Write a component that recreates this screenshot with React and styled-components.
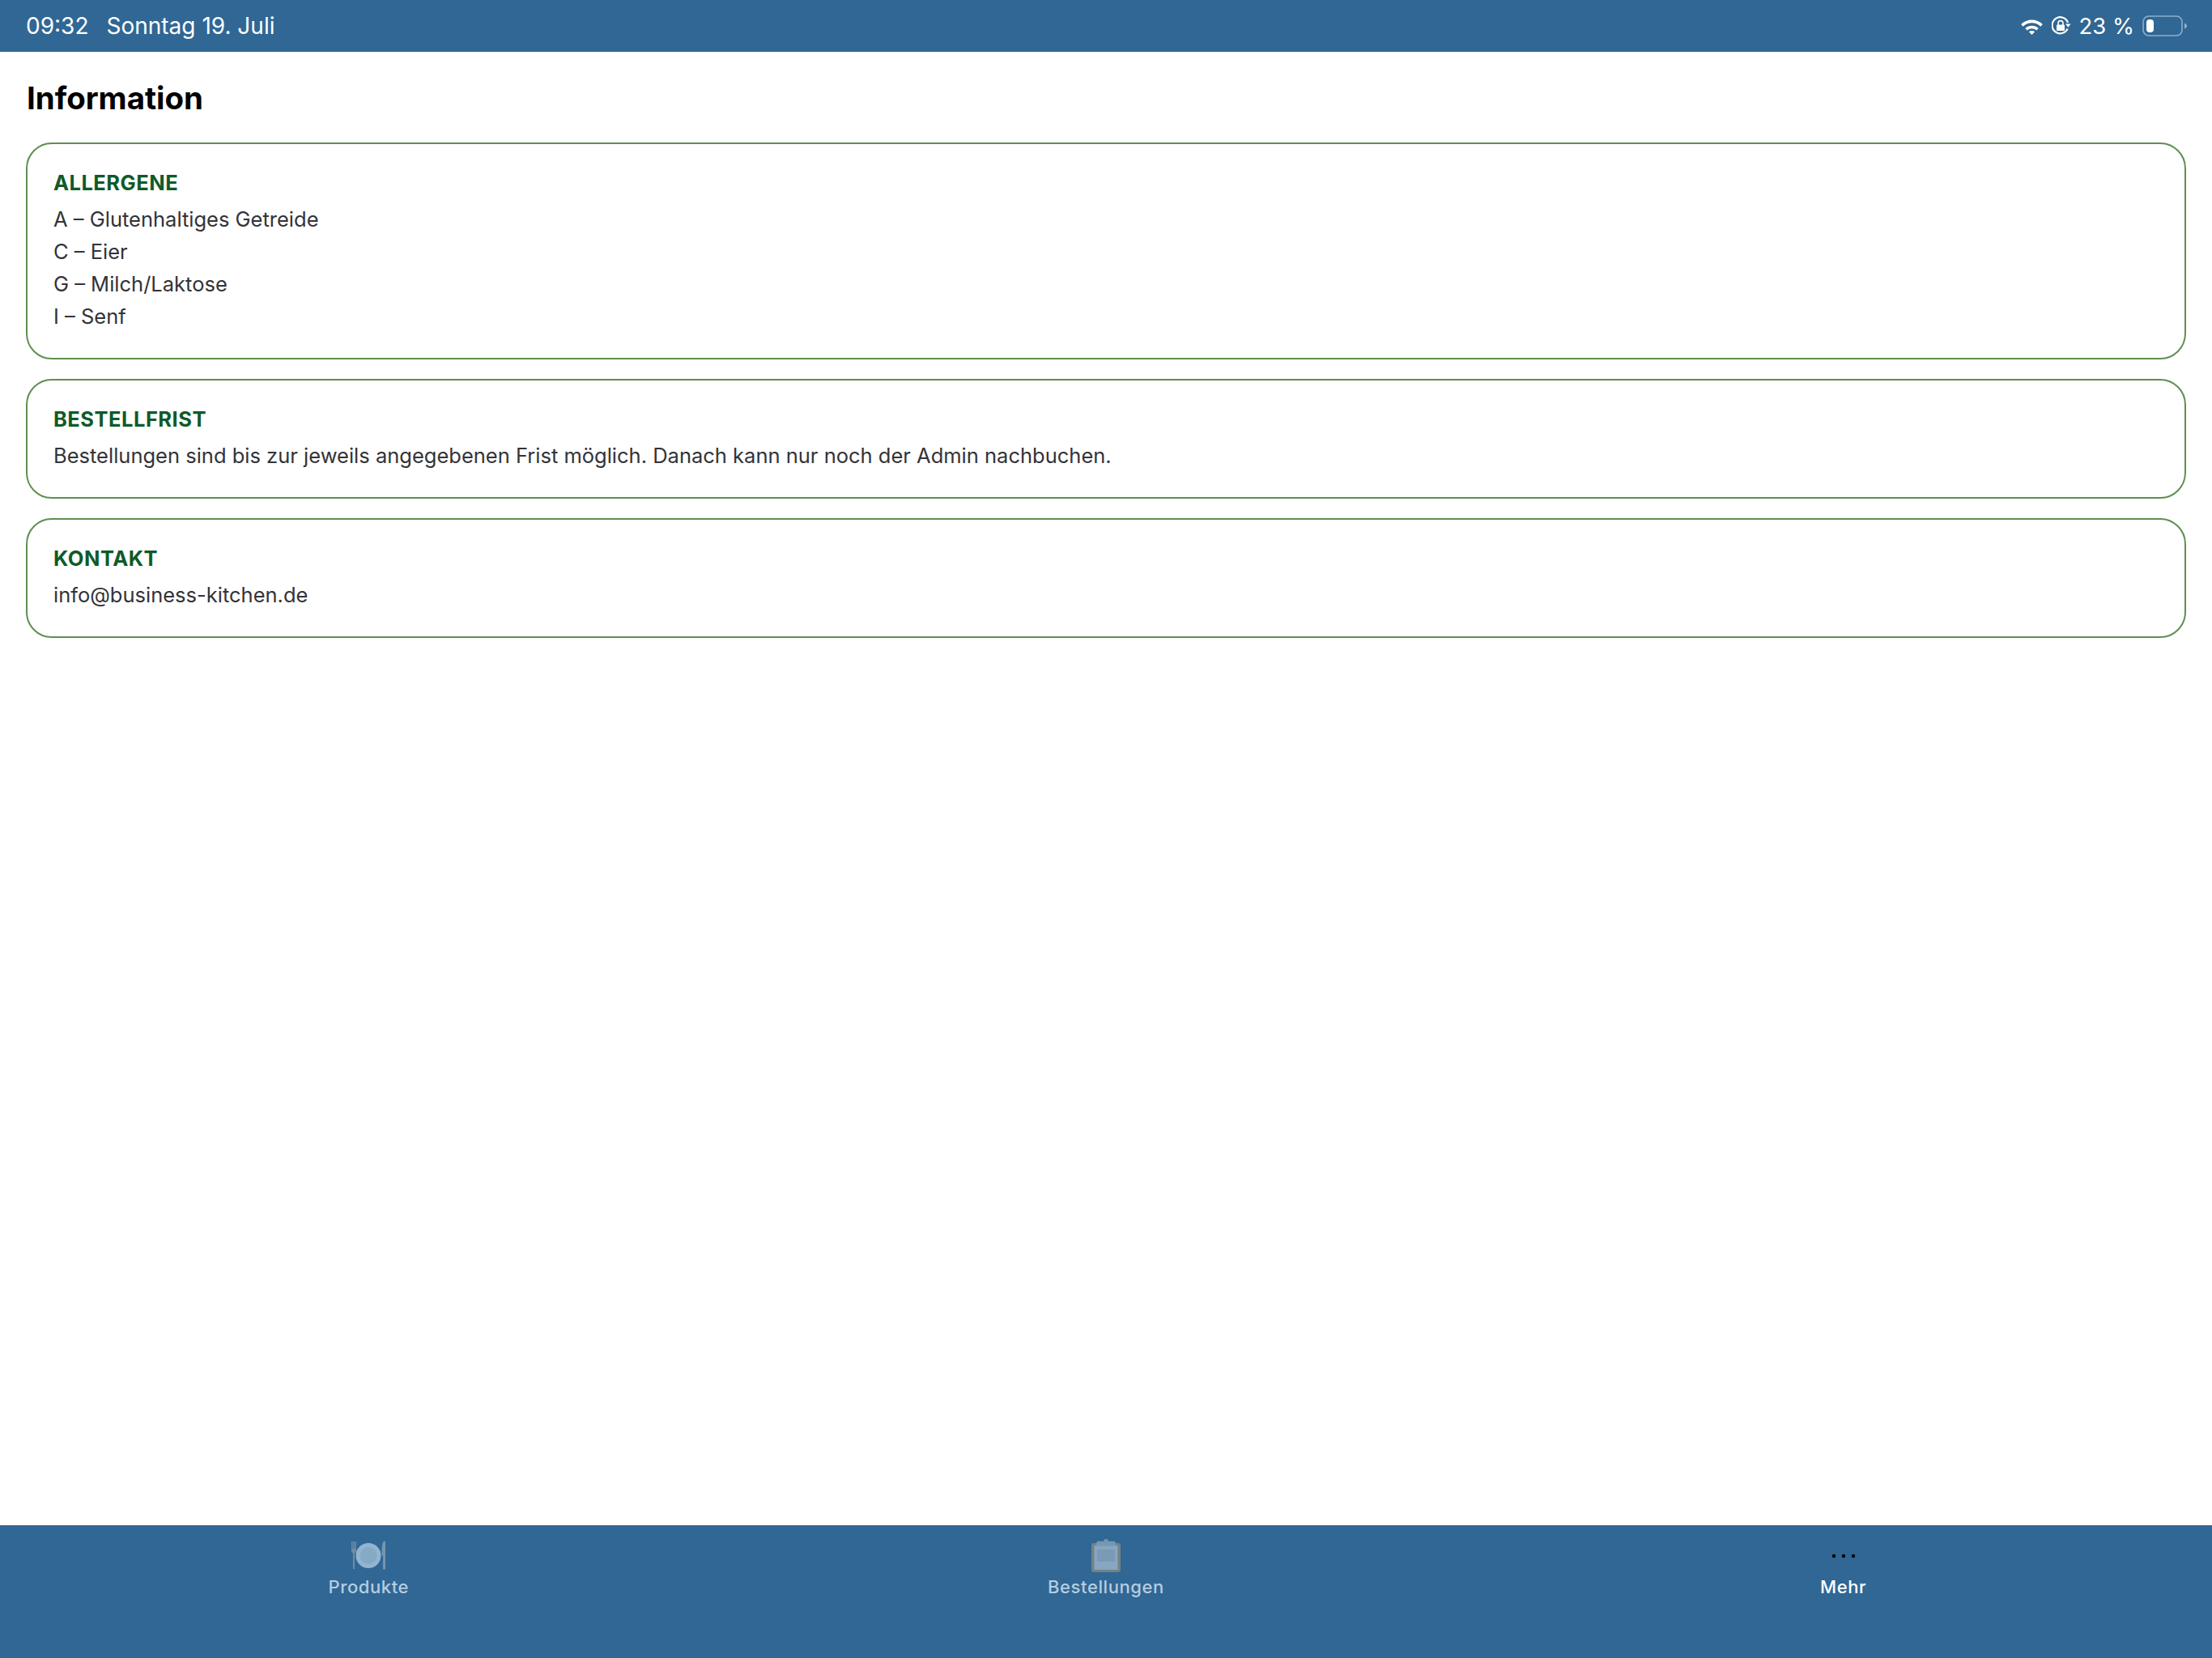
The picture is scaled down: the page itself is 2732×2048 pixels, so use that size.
import React from 'react';
import styled, { createGlobalStyle } from 'styled-components';

const GlobalStyle = createGlobalStyle`
  html, body {
    margin: 0;
    padding: 0;
    background: #ffffff;
  }
  body {
    font-family: "Inter", "Liberation Sans", sans-serif;
    font-optical-sizing: none;
    font-variation-settings: "opsz" 14;
  }
`;

const Screen = styled.div`
  width: 2732px;
  height: 2048px;
  display: flex;
  flex-direction: column;
  background: #ffffff;
  overflow: hidden;
`;

const StatusBar = styled.div`
  height: 64px;
  flex-shrink: 0;
  display: flex;
  align-items: center;
  justify-content: space-between;
  padding: 0 30px 0 32px;
  background: #306794;
  color: #ffffff;
  font-size: 28px;
`;

const StatusGroup = styled.div`
  display: flex;
  align-items: center;
  gap: ${(p) => p.$gap || 22}px;
`;

const BatteryText = styled.span`
  font-size: 27.5px;
`;

const Content = styled.main`
  flex: 1;
  padding: 29px 32px 0 33px;
`;

const Title = styled.h1`
  margin: 0 0 27px;
  font-size: 38.4px;
  line-height: 56px;
  font-weight: 700;
  color: #000000;
`;

const CardList = styled.div`
  display: flex;
  flex-direction: column;
  gap: 24px;
  margin-left: -1px;
`;

const Card = styled.section`
  border: 2px solid #5f8f50;
  border-radius: 32px;
  padding: 28px 32px 31px;
`;

const CardTitle = styled.h2`
  margin: 0 0 5px;
  font-size: 25.5px;
  line-height: 40px;
  font-weight: 700;
  letter-spacing: 0.5px;
  color: #0f5a28;
`;

const CardLine = styled.div`
  font-size: 25.5px;
  line-height: 40px;
  color: #333338;
`;

const TabBar = styled.nav`
  height: 164px;
  flex-shrink: 0;
  display: grid;
  grid-template-columns: repeat(3, 1fr);
  background: #306794;
`;

const Tab = styled.div`
  display: flex;
  flex-direction: column;
  align-items: center;
  padding-top: 16px;
  color: ${(p) => (p.$active ? '#ffffff' : '#b5cde0')};
`;

const TabIcon = styled.div`
  height: 44px;
  display: flex;
  align-items: center;
  justify-content: center;
  opacity: ${(p) => (p.$active ? 1 : 0.75)};
`;

const TabLabel = styled.span`
  font-size: 22px;
  line-height: 32px;
  font-weight: 500;
  letter-spacing: 0.6px;
`;

const WifiIcon = () => (
  <svg width="29" height="21" viewBox="0 0 30 22">
    <path d="M1 8.5C9 0.8 21 0.8 29 8.5L26.4 11.2C19.8 5 10.2 5 3.6 11.2Z" fill="#fff" />
    <path d="M6.4 13.6C11.4 9 18.6 9 23.6 13.6L21 16.2C17.4 13 12.6 13 9 16.2Z" fill="#fff" />
    <path d="M11.2 18.2C13.4 16.4 16.6 16.4 18.8 18.2L15 22Z" fill="#fff" />
  </svg>
);

const RotationLockIcon = () => (
  <svg width="24" height="24" viewBox="2 1 24 24">
    <path d="M21.6 16.5A10 10 0 1 1 22 9" fill="none" stroke="#fff" strokeWidth="2.2" />
    <path d="M19 10.5H25.6L22.3 14.8Z" fill="#fff" />
    <rect x="8" y="11.5" width="10" height="7.5" rx="1.2" fill="#fff" />
    <path d="M10 12V9.6a3 3 0 0 1 6 0V12" fill="none" stroke="#fff" strokeWidth="1.6" />
  </svg>
);

const BatteryIcon = () => (
  <svg width="56" height="28" viewBox="0 0 56 28">
    <rect x="1" y="2" width="48" height="24" rx="7" fill="none" stroke="#8fb0cb" strokeWidth="1.6" />
    <rect x="5" y="6" width="9" height="16" rx="4" fill="#fff" />
    <path d="M52 10.5C54 11.5 55 12.6 55 14S54 16.5 52 17.5Z" fill="#8fb0cb" />
  </svg>
);

const PlateIcon = () => (
  <svg width="44" height="40" viewBox="0 0 44 40">
    <rect x="1.2" y="2" width="1.2" height="12" fill="#8ea6ba" />
    <rect x="3.4" y="2" width="1.2" height="12" fill="#8ea6ba" />
    <rect x="5.6" y="2" width="1.2" height="12" fill="#8ea6ba" />
    <path d="M1.2 11H6.8V15L5 17V36H3V17L1.2 15Z" fill="#8a98a6" />
    <circle cx="22" cy="19.5" r="15.5" fill="#b4cfe3" />
    <circle cx="22" cy="19.5" r="10.5" fill="#a3c0d6" />
    <path d="M41 1.5C39.2 4 38.4 8 38.4 19.5H40V36.5H43V2Z" fill="#8ea3b5" />
  </svg>
);

const ClipboardIcon = () => (
  <svg width="38" height="42" viewBox="0 0 38 42">
    <rect x="1" y="5" width="36" height="36" rx="3" fill="#8b8b80" />
    <rect x="4.5" y="8" width="29" height="30" fill="#a5bbd0" />
    <rect x="8" y="13" width="22" height="15" fill="#95abc2" />
    <path d="M8 2.8H16.2a2.8 2.8 0 0 1 5.6 0H30L32 8.5H6Z" fill="#8fa6bb" />
  </svg>
);

const DotsIcon = () => (
  <svg width="30" height="6" viewBox="0 0 30 6">
    <circle cx="3" cy="3" r="2.2" fill="#000" />
    <circle cx="15" cy="3" r="2.2" fill="#000" />
    <circle cx="27" cy="3" r="2.2" fill="#000" />
  </svg>
);

const cards = [
  {
    title: 'ALLERGENE',
    lines: ['A – Glutenhaltiges Getreide', 'C – Eier', 'G – Milch/Laktose', 'I – Senf'],
  },
  {
    title: 'BESTELLFRIST',
    lines: ['Bestellungen sind bis zur jeweils angegebenen Frist möglich. Danach kann nur noch der Admin nachbuchen.'],
  },
  {
    title: 'KONTAKT',
    lines: ['info@business-kitchen.de'],
  },
];

const App = () => (
  <>
    <GlobalStyle />
    <Screen>
      <StatusBar>
        <StatusGroup>
          <span>09:32</span>
          <span>Sonntag 19. Juli</span>
        </StatusGroup>
        <StatusGroup $gap={10}>
          <WifiIcon />
          <RotationLockIcon />
          <BatteryText>23 %</BatteryText>
          <BatteryIcon />
        </StatusGroup>
      </StatusBar>
      <Content>
        <Title>Information</Title>
        <CardList>
          {cards.map((card) => (
            <Card key={card.title}>
              <CardTitle>{card.title}</CardTitle>
              {card.lines.map((line) => (
                <CardLine key={line}>{line}</CardLine>
              ))}
            </Card>
          ))}
        </CardList>
      </Content>
      <TabBar>
        <Tab>
          <TabIcon><PlateIcon /></TabIcon>
          <TabLabel>Produkte</TabLabel>
        </Tab>
        <Tab>
          <TabIcon><ClipboardIcon /></TabIcon>
          <TabLabel>Bestellungen</TabLabel>
        </Tab>
        <Tab $active>
          <TabIcon $active><DotsIcon /></TabIcon>
          <TabLabel>Mehr</TabLabel>
        </Tab>
      </TabBar>
    </Screen>
  </>
);

export default App;
